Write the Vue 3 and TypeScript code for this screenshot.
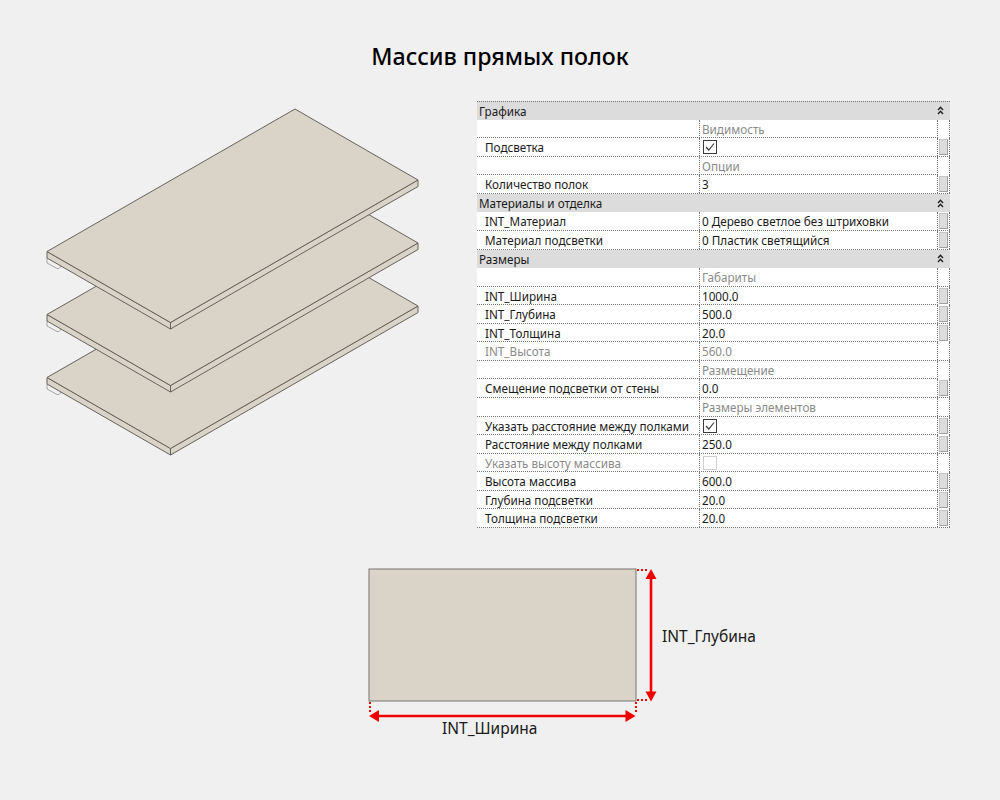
<template>
  <div class="page">
    <h1 class="title">Массив прямых полок</h1>

    <div class="middle">
      <svg class="shelves" width="477" height="427" viewBox="0 101 477 427">
        <g v-for="top in shelfOffsets" :key="top" :transform="`translate(0 ${top})`">
          <path class="bracket" d="M47 258V263L57 268.500H59L60.500 267V264" />
          <path class="edge" d="M47 251.500L170.500 322.500L418 180V186.500L170.500 329L47 258Z" />
          <path class="top" d="M295 109L418 180L170.500 322.500L47 251.500Z" />
          <path class="thin" d="M170.500 322.500V329" />
        </g>
      </svg>

      <div class="props">
        <div v-for="row in rows" :key="row.label + row.value" class="row" :class="row.kind">
          <template v-if="row.kind === 'head'">
            <div class="head-label">{{ row.label }}</div>
            <svg class="chevron" width="7" height="9" viewBox="0 0 7 9">
              <path d="M1 4L3.500 1.200L6 4M1 8L3.500 5.200L6 8" />
            </svg>
          </template>
          <template v-else>
            <div class="label" :class="{ off: row.disabled }">{{ row.label }}</div>
            <div class="value" :class="{ off: row.disabled || row.kind === 'group' }">
              <span v-if="row.check !== undefined" class="check" :class="{ blank: !row.check }">
                <svg v-if="row.check" width="14" height="14" viewBox="0 0 14 14">
                  <path d="M3 7L5.800 10L11 3.500" />
                </svg>
              </span>
              <template v-else>{{ row.value }}</template>
            </div>
            <div class="side"><span v-if="row.btn" class="btn"></span></div>
          </template>
        </div>
      </div>
    </div>

    <div class="bottom">
      <svg width="600" height="190" viewBox="200 560 600 190">
        <rect class="plan" x="369" y="569" width="267" height="132" />
        <path class="dots" d="M637 570H648M637 700H648M370 702V713M636 702V713" />
        <path class="dim" d="M651 578V692M378 716H627" />
        <path class="tip" d="M651 569L656.500 579H645.500ZM651 701.500L656.500 691.500H645.500ZM369 716L379 710V722ZM635.500 716L625.500 710V722Z" />
        <text x="662" y="642">INT_Глубина</text>
        <text x="442" y="734">INT_Ширина</text>
      </svg>
    </div>
  </div>
</template>

<script setup lang="ts">
interface Row {
  kind: 'head' | 'group' | 'param'
  label: string
  value: string
  btn?: boolean
  check?: boolean
  disabled?: boolean
}

const shelfOffsets = [126, 63, 0]

const head = (label: string): Row => ({ kind: 'head', label, value: '' })
const group = (value: string): Row => ({ kind: 'group', label: '', value })
const param = (label: string, value: string): Row => ({ kind: 'param', label, value, btn: true })

const rows: Row[] = [
  head('Графика'),
  group('Видимость'),
  { kind: 'param', label: 'Подсветка', value: '', btn: true, check: true },
  group('Опции'),
  param('Количество полок', '3'),
  head('Материалы и отделка'),
  param('INT_Материал', '0 Дерево светлое без штриховки'),
  param('Материал подсветки', '0 Пластик светящийся'),
  head('Размеры'),
  group('Габариты'),
  param('INT_Ширина', '1000.0'),
  param('INT_Глубина', '500.0'),
  param('INT_Толщина', '20.0'),
  { kind: 'param', label: 'INT_Высота', value: '560.0', disabled: true },
  group('Размещение'),
  param('Смещение подсветки от стены', '0.0'),
  group('Размеры элементов'),
  { kind: 'param', label: 'Указать расстояние между полками', value: '', btn: true, check: true },
  param('Расстояние между полками', '250.0'),
  { kind: 'param', label: 'Указать высоту массива', value: '', check: false, disabled: true },
  param('Высота массива', '600.0'),
  param('Глубина подсветки', '20.0'),
  param('Толщина подсветки', '20.0'),
]
</script>

<style scoped>
.page {
  width: 1000px;
  height: 800px;
  overflow: hidden;
  background: #f0f0f0;
  font-family: "Noto Sans", sans-serif;
  color: #1a1a1a;
}

.title {
  margin: 0;
  padding-top: 40px;
  height: 32px;
  line-height: 32px;
  font-size: 23.200px;
  font-weight: 500;
  text-align: center;
  color: #000;
}

.middle {
  display: flex;
  margin-top: 29px;
}

.shelves {
  display: block;
  flex: none;
}

.top,
.edge {
  fill: #dad4c8;
  stroke: #66635c;
  stroke-width: 1;
}

.thin {
  fill: none;
  stroke: #66635c;
}

.bracket {
  fill: #f0f0f0;
  stroke: #a5a5a5;
}

.props {
  width: 473px;
  height: 427px;
  display: grid;
  grid-auto-rows: 1fr;
  font-size: 11.700px;
}

.row {
  display: grid;
  grid-template-columns: 222px 238px 13px;
  box-sizing: border-box;
  border-bottom: 1px dotted #777;
  background: #fff;
  line-height: 18px;
  white-space: nowrap;
  min-height: 0;
}

.row:first-child {
  border-top: 1px dotted #777;
}

.row.head {
  display: flex;
  justify-content: space-between;
  align-items: center;
  background: #dcdcdc;
  border-bottom: none;
}

.head-label {
  padding-left: 2px;
}

.chevron {
  margin-right: 6px;
}

.chevron path {
  fill: none;
  stroke: #222;
  stroke-width: 1.400;
}

.label {
  padding-left: 8px;
}

.value {
  padding-left: 2px;
  border-left: 1px dotted #777;
}

.off {
  color: #8a8a8a;
}

.side {
  background: #fff;
  border-left: 1px dotted #777;
  border-right: 1px dotted #777;
  box-sizing: border-box;
  padding: 1px;
}

.btn {
  display: block;
  height: 100%;
  box-sizing: border-box;
  background: #dcdcdc;
  border: 1px solid #c4c4c4;
  border-right-color: #a0a0a0;
  border-bottom-color: #a0a0a0;
}

.check {
  display: block;
  width: 14px;
  height: 14px;
  margin-top: 2px;
  margin-left: 1px;
  box-sizing: border-box;
  border: 1px solid #3c3c3c;
  background: #fff;
}

.check.blank {
  border-color: #cfcfcf;
}

.check svg {
  display: block;
  margin: -1px;
}

.check path {
  fill: none;
  stroke: #3c3c3c;
  stroke-width: 1.200;
}

.bottom {
  display: flex;
  justify-content: center;
  margin-top: 32px;
}

.bottom svg {
  display: block;
}

.plan {
  fill: #dad4c8;
  stroke: #77746c;
}

.dots {
  fill: none;
  stroke: #ee0000;
  stroke-width: 2;
  stroke-dasharray: 2 2;
}

.dim {
  fill: none;
  stroke: #ee0000;
  stroke-width: 2.600;
}

.tip {
  fill: #ee0000;
}

text {
  font-size: 15.500px;
  fill: #1a1a1a;
}
</style>
